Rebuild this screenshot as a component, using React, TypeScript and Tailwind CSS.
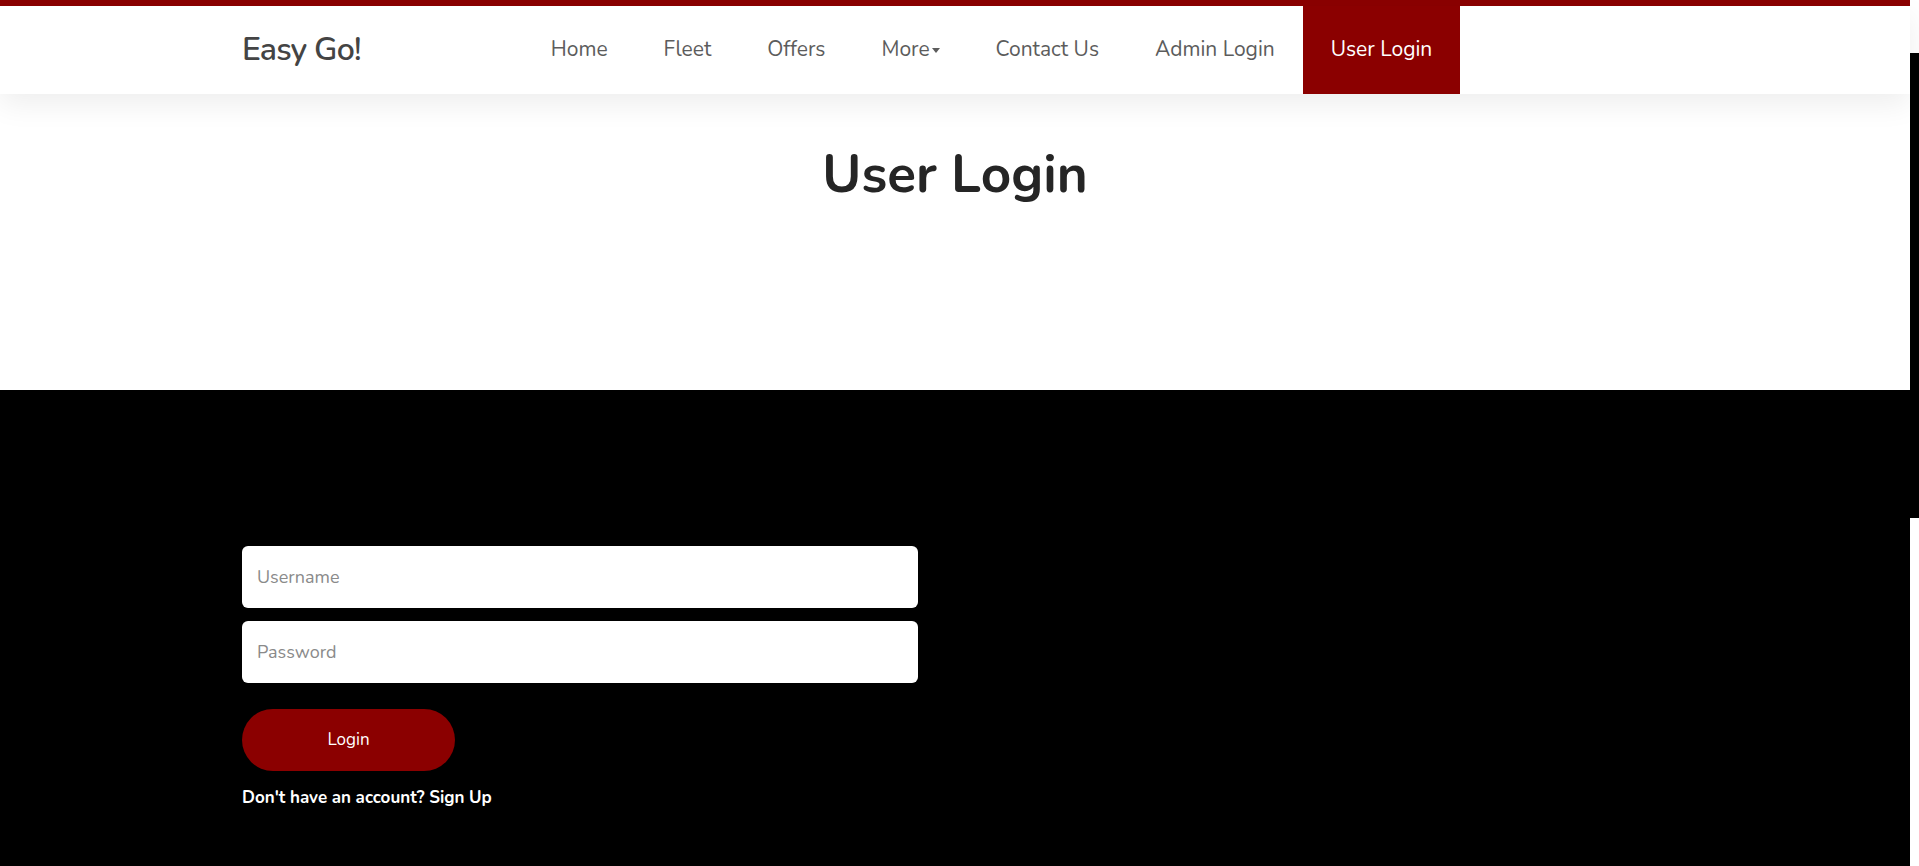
const links = ["Home", "Fleet", "Offers", "More", "Contact Us", "Admin Login"]

const font = { fontFamily: "Nunito, Lato, 'Noto Sans', sans-serif" }

const Navbar = () => {
  return (
    <nav className="relative z-10 h-[88px] bg-white shadow-[0_10px_28px_rgba(0,0,0,0.07)]">
      <div className="flex h-full items-center pl-[242px]">
        <a className="text-[32px] font-semibold text-[#444] tracking-tight">Easy Go!</a>
        <ul className="ml-[162px] flex h-full items-center">
          {links.map(link => (
            <li key={link} className="flex h-full items-center px-7 text-[21px] text-[#5c5c5c]">
              {link}
              {link === "More" && (
                <span className="ml-[2px] inline-block h-0 w-0 border-x-[4.5px] border-t-[5px] border-x-transparent border-t-[#5c5c5c]" />
              )}
            </li>
          ))}
          <li className="flex h-full items-center bg-[#8b0000] px-7 text-[21px] text-white">User Login</li>
        </ul>
      </div>
    </nav>
  )
}

const LoginForm = () => {
  return (
    <form className="flex w-[676px] flex-col">
      <input
        placeholder="Username"
        className="h-[62px] rounded-md bg-white px-[15px] text-lg text-[#333] placeholder:text-[#8a8a8a] outline-none"
      />
      <input
        type="password"
        placeholder="Password"
        className="mt-[13px] h-[62px] rounded-md bg-white px-[15px] text-lg text-[#333] placeholder:text-[#8a8a8a] outline-none"
      />
      <button type="button" className="mt-[26px] h-[62px] w-[213px] rounded-full bg-[#8b0000] text-[17px] text-white">
        Login
      </button>
      <p className="mt-[14px] text-[17px] font-bold text-white">
        Don't have an account? <a>Sign Up</a>
      </p>
    </form>
  )
}

export default function App() {
  return (
    <div className="flex min-h-[866px] w-full bg-white" style={font}>
      <div className="flex w-[1910px] flex-col">
        <div className="h-[6px] bg-[#8b0000]" />
        <Navbar />
        <section className="h-[296px] bg-white pt-[49px] text-center">
          <h1 className="text-[53px] font-bold leading-[1.2] text-[#252525]">User Login</h1>
        </section>
        <section className="flex-1 bg-black pl-[242px] pt-[156px] pb-16">
          <LoginForm />
        </section>
      </div>
      <div className="w-[9px] bg-white">
        <div className="mt-[53px] h-[465px] bg-black" />
      </div>
    </div>
  )
}
